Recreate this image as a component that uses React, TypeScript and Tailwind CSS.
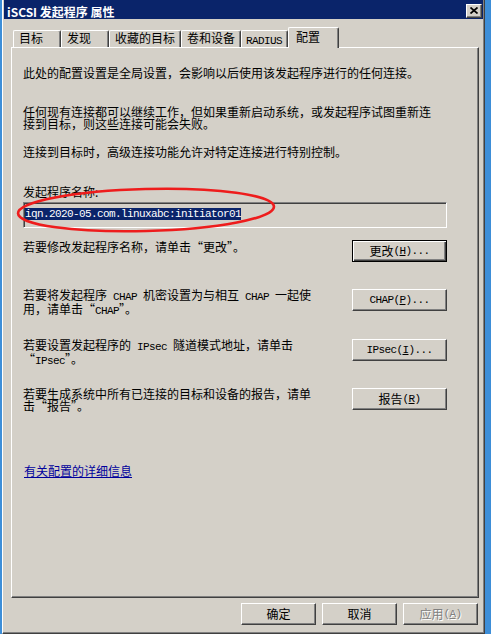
import React from 'react'
import clsx from 'clsx'

const Mono = ({ children }: { children: React.ReactNode }) => (
  <span className="font-['Liberation_Mono',monospace] text-[11px] tracking-[-0.6px]">{children}</span>
)

const U = ({ children }: { children: React.ReactNode }) => <span className="underline underline-offset-1">{children}</span>

interface BtnProps {
  children: React.ReactNode
  w: number
  isDefault?: boolean
  disabled?: boolean
}

const Btn = ({ children, w, isDefault, disabled }: BtnProps) => (
  <div
    className={clsx(
      'flex h-[22px] shrink-0 items-center justify-center bg-[#d4d0c8] text-[12px] leading-[12px]',
      w === 95 ? 'w-[95px]' : 'w-[75px]',
      isDefault
        ? 'border border-black shadow-[inset_1px_1px_0_#ffffff,inset_-1px_-1px_0_#404040,inset_-2px_-2px_0_#808080]'
        : 'border border-t-white border-l-white border-r-[#404040] border-b-[#404040] shadow-[inset_-1px_-1px_0_#808080]',
      disabled ? 'text-[#808080] [text-shadow:1px_1px_0_#ffffff]' : 'text-black'
    )}
  >
    {children}
  </div>
)

const tabs = [
  { label: '目标', w: 'w-[48px]' },
  { label: '发现', w: 'w-[48px]' },
  { label: '收藏的目标', w: 'w-[72px]' },
  { label: '卷和设备', w: 'w-[60px]' },
]

export default function App() {
  return (
    <div className="h-[634px] w-[491px] overflow-hidden bg-[#3d8ed8] font-['Noto_Sans_CJK_SC',sans-serif] text-[12px] leading-[12px] text-black">
      <div className="ml-[2px] flex h-[634px] w-[483px] flex-col border-b border-l border-r border-b-[#404040] border-l-white border-r-[#404040] bg-[#d4d0c8] shadow-[inset_-1px_-1px_0_#808080]">
        {/* title bar */}
        <div className="mx-[1px] flex h-[19px] items-center justify-between bg-[#0a246a] pl-[3px] pr-[1px] pt-[4px]">
          <span className="text-[12px] font-bold leading-[12px] text-white">iSCSI 发起程序 属性</span>
          <div className="mb-[2px] flex h-[14px] w-[16px] items-center justify-center border border-t-white border-l-white border-r-[#404040] border-b-[#404040] bg-[#d4d0c8] shadow-[inset_-1px_-1px_0_#808080]">
            <svg width="8" height="7" viewBox="0 0 8 7">
              <path d="M0.5 0.5 L7.5 6.5 M7.5 0.5 L0.5 6.5" stroke="#000" strokeWidth="1.7" />
            </svg>
          </div>
        </div>

        {/* tabs */}
        <div className="mt-[8px] flex h-[20px] items-end pl-[10px]">
          {tabs.map((t) => (
            <div
              key={t.label}
              className={clsx(
                'h-[17px] shrink-0 rounded-t-[2px] border-l border-r border-t border-l-white border-r-[#404040] border-t-white pl-[5px] pt-[1px] shadow-[inset_-1px_0_0_#808080]',
                t.w
              )}
            >
              {t.label}
            </div>
          ))}
          <div className="h-[17px] w-[47px] shrink-0 rounded-t-[2px] border-l border-r border-t border-l-white border-r-[#404040] border-t-white pl-[4px] pt-[2px] shadow-[inset_-1px_0_0_#808080]">
            <Mono>RADIUS</Mono>
          </div>
          <div className="relative z-10 -mb-[1px] h-[21px] w-[51px] shrink-0 rounded-t-[2px] border-l border-r border-t border-l-white border-r-[#404040] border-t-white bg-[#d4d0c8] pl-[7px] pt-[3px] shadow-[inset_-1px_0_0_#808080]">
            配置
          </div>
        </div>

        {/* panel */}
        <div className="relative ml-[8px] h-[551px] w-[468px] border border-b-[#404040] border-l-white border-r-[#404040] border-t-white pl-[11px] pt-[19px] shadow-[inset_-1px_-1px_0_#808080]">
          <div className="w-[424px]">
            <p>此处的配置设置是全局设置，会影响以后使用该发起程序进行的任何连接。</p>
            <p className="mt-[27px]">
              任何现有连接都可以继续工作，但如果重新启动系统，或发起程序试图重新连
              <br />
              接到目标，则这些连接可能会失败。
            </p>
            <p className="mt-[16px]">连接到目标时，高级连接功能允许对特定连接进行特别控制。</p>
            <p className="mt-[28px]">发起程序名称:</p>
            <div className="mt-[4px] h-[26px] w-[424px] border border-b-white border-l-[#808080] border-r-white border-t-[#808080] pl-[1px] pt-[3px] shadow-[inset_1px_1px_0_#404040]">
              <span className="bg-[#0a246a] font-['Liberation_Mono',monospace] text-[11px] leading-[12px] tracking-[-0.6px] text-white">
                iqn.2020-05.com.linuxabc:initiator01
              </span>
            </div>

            <div className="mt-[12px] flex h-[24px] items-start justify-between">
              <p className="pt-[1px]">若要修改发起程序名称，请单击“更改”。</p>
              <Btn w={95} isDefault>
                更改<Mono>(<U>H</U>)...</Mono>
              </Btn>
            </div>

            <div className="mt-[25px] flex h-[24px] items-start justify-between">
              <p>
                若要将发起程序<Mono> CHAP </Mono>机密设置为与相互<Mono> CHAP </Mono>一起使
                <br />
                用，请单击“<Mono>CHAP</Mono>”。
              </p>
              <Btn w={95}>
                <Mono>
                  CHAP(<U>P</U>)...
                </Mono>
              </Btn>
            </div>

            <div className="mt-[26px] flex h-[24px] items-start justify-between">
              <p>
                若要设置发起程序的<Mono> IPsec </Mono>隧道模式地址，请单击
                <br />“<Mono>IPsec</Mono>”。
              </p>
              <Btn w={95}>
                <Mono>
                  IPsec(<U>I</U>)...
                </Mono>
              </Btn>
            </div>

            <div className="mt-[25px] flex h-[24px] items-start justify-between">
              <p>
                若要生成系统中所有已连接的目标和设备的报告，请单
                <br />
                击“报告”。
              </p>
              <Btn w={95}>
                报告<Mono>(<U>R</U>)</Mono>
              </Btn>
            </div>

            <p className="mt-[53px] pl-[1px]">
              <span className="text-[#00009c] underline underline-offset-1">有关配置的详细信息</span>
            </p>
          </div>

          {/* red annotation ellipse */}
          <svg className="pointer-events-none absolute left-[-1px] top-[-1px] overflow-visible" width="468" height="551">
            <ellipse
              cx="135"
              cy="163"
              rx="128"
              ry="21"
              fill="none"
              stroke="#ee1c1c"
              strokeWidth="2.6"
              transform="rotate(-1.5 135 163)"
            />
          </svg>
        </div>

        {/* dialog buttons */}
        <div className="ml-[238px] mt-[5px] flex gap-[6px]">
          <Btn w={75}>确定</Btn>
          <Btn w={75}>取消</Btn>
          <Btn w={75} disabled>
            应用<Mono>(<U>A</U>)</Mono>
          </Btn>
        </div>
      </div>
    </div>
  )
}
